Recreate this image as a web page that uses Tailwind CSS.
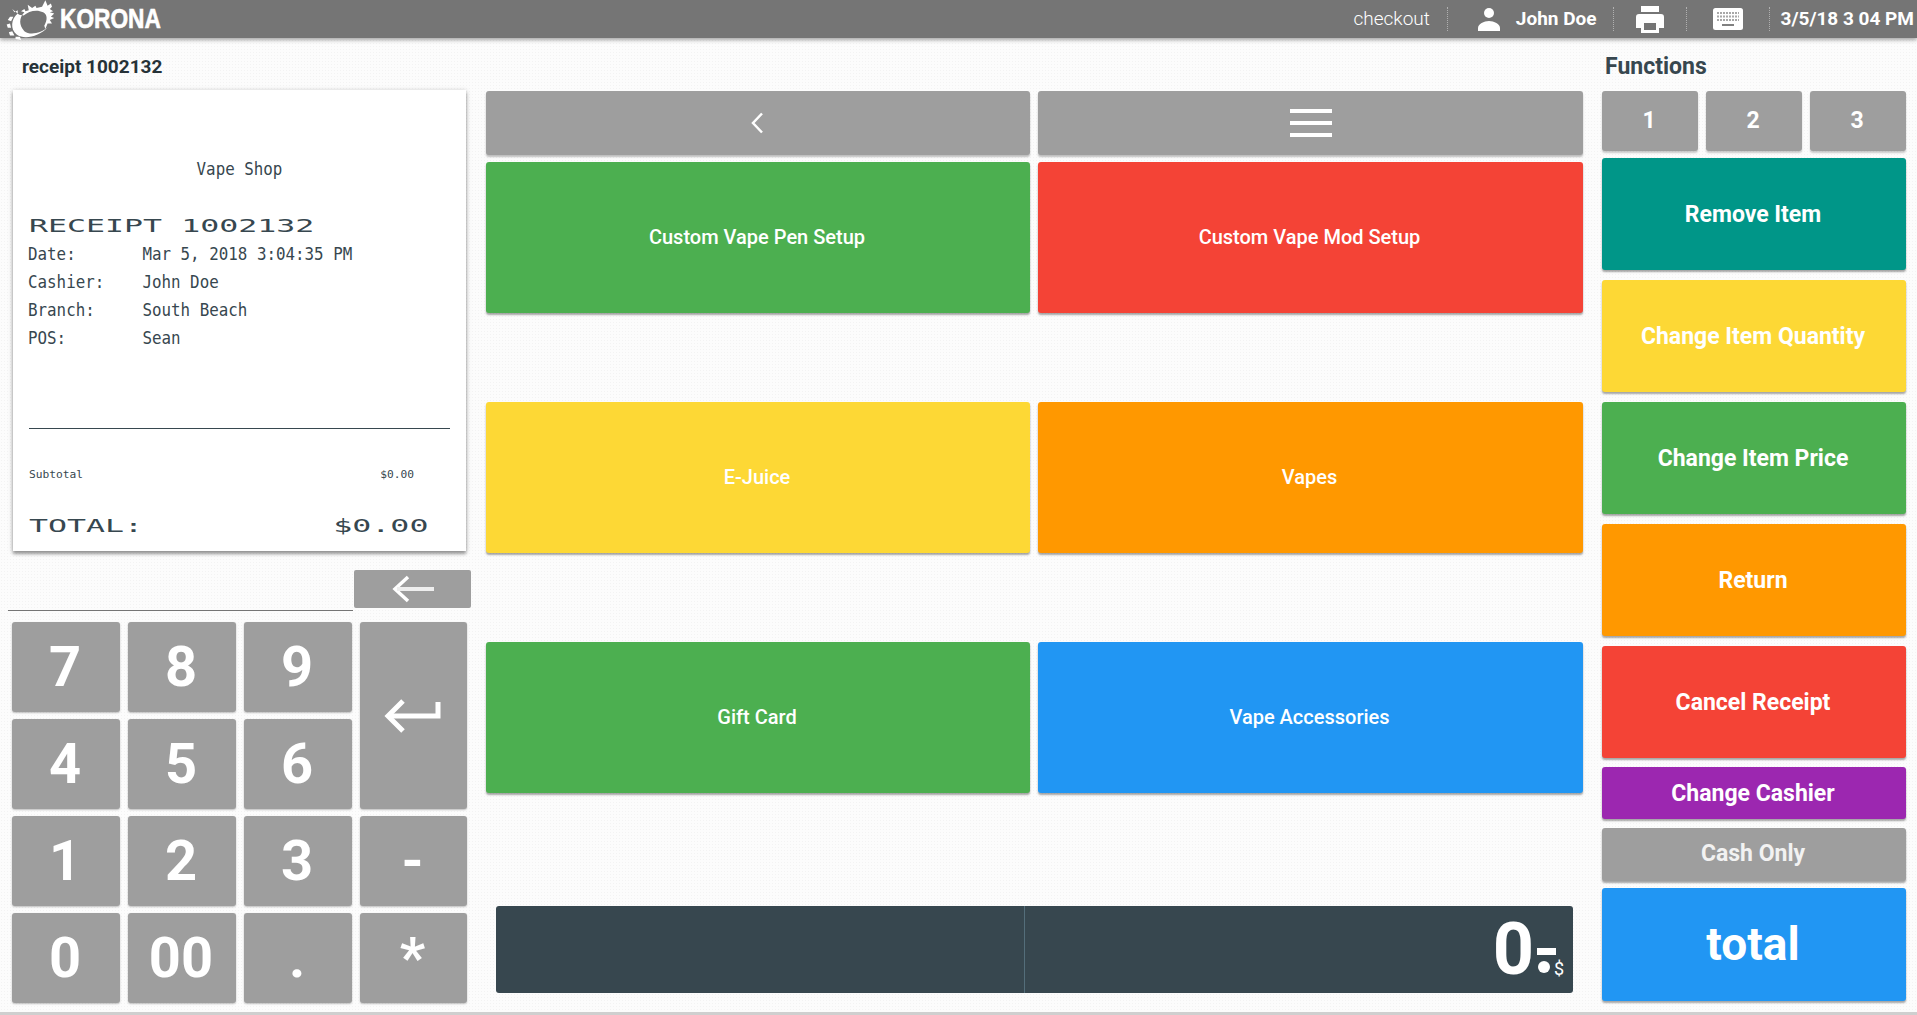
<!DOCTYPE html>
<html lang="en">
<head>
<meta charset="utf-8">
<title>KORONA POS</title>
<script src="https://cdn.jsdelivr.net/npm/@tailwindcss/browser@4"></script>
</head>
<body class="m-0 overflow-hidden">
<div class="w-[1917px] h-[1015px] overflow-hidden flex flex-col bg-[#fcfcfc] bg-[radial-gradient(#f3f3f3_1px,transparent_1px)] bg-[size:3px_3px] font-['Roboto',sans-serif] text-[#37474f]">

  <!-- header -->
  <header class="relative z-10 h-[38px] shrink-0 flex items-center bg-[#757575] shadow-[0_2px_4px_rgba(0,0,0,0.35)] text-white">
    <svg class="ml-[3px] -mt-[1px] w-[56px] h-[42px] shrink-0" viewBox="0 0 50 38" fill="#fff">
      <path d="M8 10l2 3 3-2 0 3C7 19 6 28 12 33c7 5 20 2 29-7-7 6-17 8-22 4-5-5-5-12 0-17l-3-1 3-2 1 2 3-1-1-5 4 3 3-2 1 2 5-1 3-6 2 5 3-2 1 3-2 2 3 2-3 1 4 1-3 3 3 1-4 2 2 3-4 0-2 5-1-3c3-5 3-10-1-12-6-3-13-1-18 3 1-1-3 0-4-1z"/>
      <path d="M6 17l3 0-2 4-3-1zM3 24l3-1 1 4-3 0zM5 31l3-1 2 4-4 0zM11 35l4 0 1 3-5-1z"/>
    </svg>
    <span class="ml-[1px] w-[124px] -mr-[23px] inline-block origin-left scale-x-[0.84] font-['Liberation_Sans',sans-serif] font-bold text-[27px] leading-none [-webkit-text-stroke:0.6px_white]">KORONA</span>

    <span class="ml-auto -mt-[2px] font-light text-[19px] leading-none">checkout</span>
    <span class="ml-[17px] h-[24px] border-l border-dotted border-[#b0b0b0]"></span>
    <svg class="ml-[29px] w-[24px] h-[26px]" viewBox="0 0 24 26" fill="#fff"><circle cx="12" cy="7" r="5"/><path d="M1 25v-3c0-4 6-7 11-7s11 3 11 7v3z"/></svg>
    <span class="ml-[15px] -mt-[2px] font-bold text-[19px] leading-none">John Doe</span>
    <span class="ml-[16px] h-[24px] border-l border-dotted border-[#b0b0b0]"></span>
    <svg class="ml-[21px] w-[30px] h-[28px]" viewBox="0 0 30 28" fill="#fff"><path d="M6 1h18v6H6z"/><path fill-rule="evenodd" d="M4 9h22a3 3 0 0 1 3 3v11h-5v5H6v-5H1V12a3 3 0 0 1 3-3zM9 18v7h12v-7z"/></svg>
    <span class="ml-[21px] h-[24px] border-l border-dotted border-[#b0b0b0]"></span>
    <svg class="ml-[26px] w-[30px] h-[22px]" viewBox="0 0 30 22"><rect width="30" height="22" rx="2.500" fill="#fff"/><g stroke="#a8a8a8" stroke-width="2" stroke-dasharray="2 1"><path d="M4 5h22M4 8.500h22M4 12h22"/></g><rect x="9" y="16" width="12" height="2" fill="#808080"/></svg>
    <span class="ml-[26px] h-[24px] border-l border-dotted border-[#b0b0b0]"></span>
    <span class="ml-[11px] mr-[3px] -mt-[2px] font-bold text-[19px] leading-none">3/5/18 3 04 PM</span>
  </header>

  <main class="flex-1 flex min-h-0">
    <!-- left column -->
    <section class="w-[486px] shrink-0 flex flex-col">
      <h2 class="h-[52px] pl-[22px] pt-[18px] text-[19px] leading-[22px] font-bold text-[#263238]">receipt 1002132</h2>
      <div class="ml-[13px] w-[453px] h-[461px] bg-white shadow-[0_1px_5px_rgba(0,0,0,0.25),0_3px_3px_rgba(0,0,0,0.3)] pl-[15px] font-['DejaVu_Sans_Mono',monospace]">
        <div class="mt-[65px] h-[28px] -ml-[15px] text-center text-[18px] leading-[28px] whitespace-pre scale-x-[0.88]">Vape Shop</div>
        <div class="mt-[29px] ml-[1px] h-[28px] text-[18px] leading-[28px] whitespace-pre origin-left scale-x-[1.755]">RECEIPT 1002132</div>
        <div class="h-[28px] text-[18px] leading-[28px] whitespace-pre origin-left scale-x-[0.88]">Date:       Mar 5, 2018 3:04:35 PM</div>
        <div class="h-[28px] text-[18px] leading-[28px] whitespace-pre origin-left scale-x-[0.88]">Cashier:    John Doe</div>
        <div class="h-[28px] text-[18px] leading-[28px] whitespace-pre origin-left scale-x-[0.88]">Branch:     South Beach</div>
        <div class="h-[28px] text-[18px] leading-[28px] whitespace-pre origin-left scale-x-[0.88]">POS:        Sean</div>
        <div class="mt-[76px] ml-[1px] w-[421px] h-px bg-[#37474f]"></div>
        <div class="mt-[39px] ml-[1px] h-[14px] text-[11px] leading-[14px] whitespace-pre origin-left scale-x-[1.02]">Subtotal                                            $0.00</div>
        <div class="mt-[30px] ml-[1px] h-[28px] text-[18px] leading-[28px] whitespace-pre origin-left scale-x-[1.755]">TOTAL:          $0.00</div>
      </div>
      <div class="mt-[19px] flex items-end">
        <div class="ml-[8px] w-[345px] h-px bg-[#757575] -mb-[3px]"></div>
        <button class="ml-[1px] w-[117px] h-[38px] rounded-[2px] bg-[#9e9e9e] flex items-center justify-center">
          <svg class="w-[44px] h-[28px]" viewBox="0 0 44 28" fill="none" stroke="#fff"><path d="M17 2L4 14l13 12" stroke-width="3.500"/><path d="M6 14h37" stroke-width="4" stroke="#eee"/></svg>
        </button>
      </div>
      <div class="mt-[14px] ml-[12px] w-[455px] grid grid-cols-[108px_108px_108px_107px] grid-rows-[90px_90px_90px_90px] gap-x-[8px] gap-y-[7px] text-white font-bold text-[56px] leading-none">
        <button class="rounded-[3px] bg-[#9e9e9e] shadow-[0_1px_2px_rgba(0,0,0,0.25)] flex items-center justify-center pr-[2px]">7</button>
        <button class="rounded-[3px] bg-[#9e9e9e] shadow-[0_1px_2px_rgba(0,0,0,0.25)] flex items-center justify-center pr-[2px]">8</button>
        <button class="rounded-[3px] bg-[#9e9e9e] shadow-[0_1px_2px_rgba(0,0,0,0.25)] flex items-center justify-center pr-[2px]">9</button>
        <button class="row-span-2 rounded-[3px] bg-[#9e9e9e] shadow-[0_1px_2px_rgba(0,0,0,0.25)] flex items-center justify-center pr-[4px]">
          <svg class="w-[58px] h-[36px]" viewBox="0 0 58 36" fill="none" stroke="#fff" stroke-width="5"><path d="M20 3L5 18l15 15"/><path d="M5 18h50V4"/></svg>
        </button>
        <button class="rounded-[3px] bg-[#9e9e9e] shadow-[0_1px_2px_rgba(0,0,0,0.25)] flex items-center justify-center pr-[2px]">4</button>
        <button class="rounded-[3px] bg-[#9e9e9e] shadow-[0_1px_2px_rgba(0,0,0,0.25)] flex items-center justify-center pr-[2px]">5</button>
        <button class="rounded-[3px] bg-[#9e9e9e] shadow-[0_1px_2px_rgba(0,0,0,0.25)] flex items-center justify-center pr-[2px]">6</button>
        <button class="rounded-[3px] bg-[#9e9e9e] shadow-[0_1px_2px_rgba(0,0,0,0.25)] flex items-center justify-center pr-[2px]">1</button>
        <button class="rounded-[3px] bg-[#9e9e9e] shadow-[0_1px_2px_rgba(0,0,0,0.25)] flex items-center justify-center pr-[2px]">2</button>
        <button class="rounded-[3px] bg-[#9e9e9e] shadow-[0_1px_2px_rgba(0,0,0,0.25)] flex items-center justify-center pr-[2px]">3</button>
        <button class="rounded-[3px] bg-[#9e9e9e] shadow-[0_1px_2px_rgba(0,0,0,0.25)] flex items-center justify-center pr-[2px]">-</button>
        <button class="rounded-[3px] bg-[#9e9e9e] shadow-[0_1px_2px_rgba(0,0,0,0.25)] flex items-center justify-center pr-[2px]">0</button>
        <button class="rounded-[3px] bg-[#9e9e9e] shadow-[0_1px_2px_rgba(0,0,0,0.25)] flex items-center justify-center pr-[2px]">00</button>
        <button class="rounded-[3px] bg-[#9e9e9e] shadow-[0_1px_2px_rgba(0,0,0,0.25)] flex items-center justify-center pr-[2px]">.</button>
        <button class="rounded-[3px] bg-[#9e9e9e] shadow-[0_1px_2px_rgba(0,0,0,0.25)] flex items-center justify-center pr-[2px]">*</button>
      </div>
    </section>

    <!-- middle column -->
    <section class="w-[1097px] shrink-0 flex flex-col pt-[53px]">
      <div class="grid grid-cols-[544px_545px] gap-x-[8px] h-[64px]">
        <button class="rounded-[3px] bg-[#9e9e9e] shadow-[0_2px_2px_rgba(0,0,0,0.25)] flex items-center justify-center pr-[2px]">
          <svg class="w-[14px] h-[22px]" viewBox="0 0 14 22" fill="none" stroke="#fff" stroke-width="2.500"><path d="M12 1.500L3 11l9 9.500"/></svg>
        </button>
        <button class="rounded-[3px] bg-[#9e9e9e] shadow-[0_2px_2px_rgba(0,0,0,0.25)] flex items-center justify-center">
          <svg class="w-[42px] h-[28px]" viewBox="0 0 42 28" fill="#fff"><rect width="42" height="4"/><rect y="12" width="42" height="4"/><rect y="24" width="42" height="4"/></svg>
        </button>
      </div>
      <div class="mt-[7px] grid grid-cols-[544px_545px] grid-rows-[151px_151px_151px] gap-x-[8px] gap-y-[89px] text-white font-medium text-[20px]">
        <button class="rounded-[3px] bg-[#4caf50] shadow-[0_2px_2px_rgba(0,0,0,0.35)] pr-[2px] pb-[2px]">Custom Vape Pen Setup</button>
        <button class="rounded-[3px] bg-[#f44336] shadow-[0_2px_2px_rgba(0,0,0,0.35)] pr-[2px] pb-[2px]">Custom Vape Mod Setup</button>
        <button class="rounded-[3px] bg-[#fdd835] shadow-[0_2px_2px_rgba(0,0,0,0.35)] pr-[2px] pb-[2px]">E-Juice</button>
        <button class="rounded-[3px] bg-[#ff9800] shadow-[0_2px_2px_rgba(0,0,0,0.35)] pr-[2px] pb-[2px]">Vapes</button>
        <button class="rounded-[3px] bg-[#4caf50] shadow-[0_2px_2px_rgba(0,0,0,0.35)] pr-[2px] pb-[2px]">Gift Card</button>
        <button class="rounded-[3px] bg-[#2196f3] shadow-[0_2px_2px_rgba(0,0,0,0.35)] pr-[2px] pb-[2px]">Vape Accessories</button>
      </div>
      <div class="mt-[113px] ml-[10px] w-[1077px] h-[87px] rounded-[3px] bg-[#37474f] flex text-white">
        <div class="w-[529px] border-r border-[#546e7a]"></div>
        <div class="relative flex-1 flex justify-end items-center pr-[39px]">
          <span class="font-bold text-[72px] leading-none">0</span>
          <span class="absolute right-[17px] top-[42px] w-[19px] h-[7px] bg-white"></span>
          <span class="absolute right-[23px] top-[55px] w-[12px] h-[12px] rounded-full bg-white"></span>
          <span class="absolute right-[9px] top-[53px] text-[18px] leading-[20px]">$</span>
        </div>
      </div>
    </section>

    <!-- right column -->
    <section class="ml-[19px] w-[304px] shrink-0 flex flex-col">
      <h2 class="h-[53px] pl-[3px] pt-[17px] text-[23px] leading-[24px] font-bold">Functions</h2>
      <div class="grid grid-cols-3 gap-x-[8px] h-[60px] text-white font-bold text-[23px]">
        <button class="rounded-[3px] bg-[#9e9e9e] shadow-[0_2px_2px_rgba(0,0,0,0.2)] pr-[2px]">1</button>
        <button class="rounded-[3px] bg-[#9e9e9e] shadow-[0_2px_2px_rgba(0,0,0,0.2)] pr-[2px]">2</button>
        <button class="rounded-[3px] bg-[#9e9e9e] shadow-[0_2px_2px_rgba(0,0,0,0.2)] pr-[2px]">3</button>
      </div>
      <div class="mt-[7px] flex flex-col text-white font-bold text-[23px]">
        <button class="h-[112px] rounded-[3px] bg-[#009688] shadow-[0_2px_2px_rgba(0,0,0,0.35)] pt-[2px] pr-[2px]">Remove Item</button>
        <button class="mt-[10px] h-[112px] rounded-[3px] bg-[#fdd835] shadow-[0_2px_2px_rgba(0,0,0,0.35)] pt-[2px] pr-[2px]">Change Item Quantity</button>
        <button class="mt-[10px] h-[112px] rounded-[3px] bg-[#4caf50] shadow-[0_2px_2px_rgba(0,0,0,0.35)] pt-[2px] pr-[2px]">Change Item Price</button>
        <button class="mt-[10px] h-[112px] rounded-[3px] bg-[#ff9800] shadow-[0_2px_2px_rgba(0,0,0,0.35)] pt-[2px] pr-[2px]">Return</button>
        <button class="mt-[10px] h-[112px] rounded-[3px] bg-[#f44336] shadow-[0_2px_2px_rgba(0,0,0,0.35)] pt-[2px] pr-[2px]">Cancel Receipt</button>
        <button class="mt-[9px] h-[52px] rounded-[3px] bg-[#9c27b0] shadow-[0_2px_2px_rgba(0,0,0,0.35)] pt-[2px] pr-[2px]">Change Cashier</button>
        <button class="mt-[9px] h-[53px] rounded-[3px] bg-[#9e9e9e] shadow-[0_2px_2px_rgba(0,0,0,0.35)] pb-[1px] pr-[2px] text-[#f2f2f2]">Cash Only</button>
        <button class="mt-[7px] h-[113px] rounded-[3px] bg-[#2196f3] shadow-[0_2px_2px_rgba(0,0,0,0.35)] font-bold text-[46px] pr-[2px]">total</button>
      </div>
    </section>
  </main>
  <div class="h-[3px] shrink-0 bg-[#cfcfcf]"></div>
</div>
</body>
</html>
